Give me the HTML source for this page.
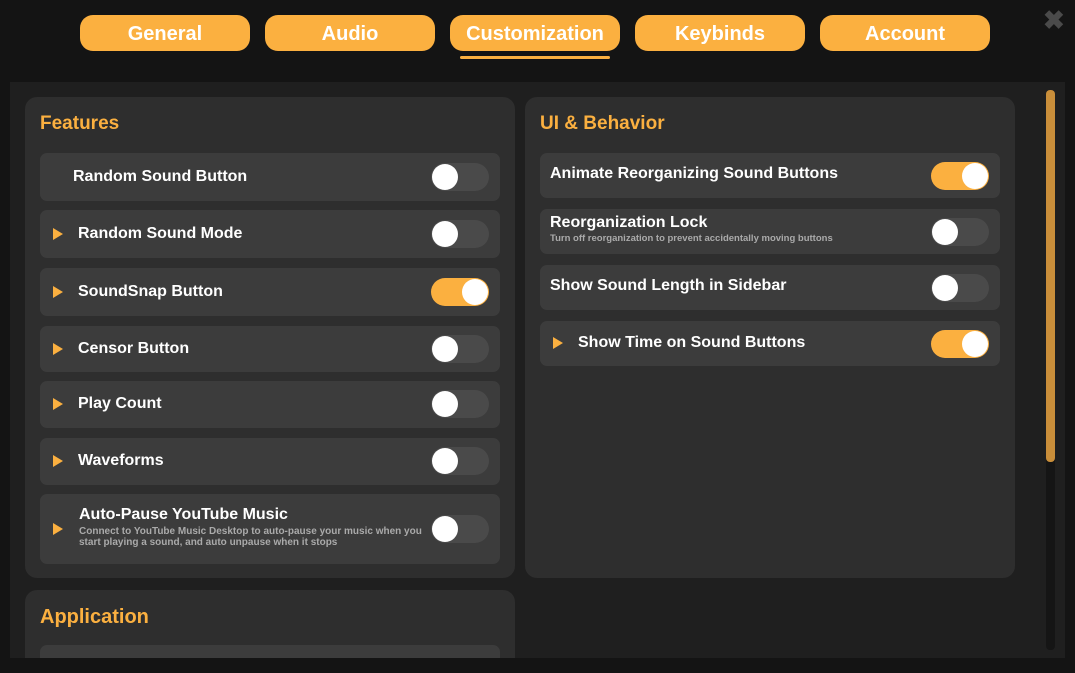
<!DOCTYPE html><html><head><style>
*{box-sizing:border-box;margin:0;padding:0}
html,body{width:1075px;height:673px;overflow:hidden}
body{background:#141414;font-family:"Liberation Sans",sans-serif;position:relative;color:#fff}
.tab{position:absolute;top:15px;width:170px;height:36px;border-radius:13px;background:#fbb040;color:#fff;font-weight:bold;font-size:20px;text-align:center;line-height:38px}
.content{position:absolute;left:10px;top:82px;width:1055px;height:576px;background:#1f1f1f;overflow:hidden}
.panel{position:absolute;background:#2e2e2e;border-radius:12px}
.title{position:absolute;left:15px;top:16px;color:#fbb040;font-weight:bold;font-size:19px}
.row{position:absolute;background:#3c3c3c;border-radius:7px;left:15px;width:460px}
.lab{position:absolute;font-weight:bold;font-size:16px;color:#fff}
.sub{position:absolute;font-size:9.5px;font-weight:bold;color:#aaa;line-height:11px}
.arr{position:absolute;left:13px;width:0;height:0;border-left:10px solid #fbb040;border-top:6px solid transparent;border-bottom:6px solid transparent}
.tg{position:absolute;right:11px;width:58px;height:28px;border-radius:14px;background:#4a4a4a}
.tg::after{content:"";position:absolute;left:1px;top:1px;width:26px;height:26px;border-radius:50%;background:#fff}
.tg.on{background:#fbb040}.tg.on::after{left:31px}
</style></head><body>
<div class="tab" style="left:80px">General</div>
<div class="tab" style="left:265px">Audio</div>
<div class="tab" style="left:450px">Customization</div>
<div class="tab" style="left:635px">Keybinds</div>
<div class="tab" style="left:820px">Account</div>
<div style="position:absolute;left:460px;top:56px;width:150px;height:3px;background:#fbb040;border-radius:2px"></div>
<div style="position:absolute;left:1043px;top:5px;font-size:26px;font-weight:bold;color:#4a4a4a">✖</div>
<div class="content">
<div class="panel" style="left:15px;top:15px;width:490px;height:481px">
<div class="title">Features</div>
<div class="row" style="top:56px;height:48px"><div class="lab" style="left:33px;top:15px">Random Sound Button</div><div class="tg" style="top:10px"></div></div>
<div class="row" style="top:113px;height:48px"><div class="arr" style="top:18px"></div><div class="lab" style="left:38px;top:15px">Random Sound Mode</div><div class="tg" style="top:10px"></div></div>
<div class="row" style="top:171px;height:48px"><div class="arr" style="top:18px"></div><div class="lab" style="left:38px;top:15px">SoundSnap Button</div><div class="tg on" style="top:10px"></div></div>
<div class="row" style="top:229px;height:46px"><div class="arr" style="top:17px"></div><div class="lab" style="left:38px;top:14px">Censor Button</div><div class="tg" style="top:9px"></div></div>
<div class="row" style="top:284px;height:47px"><div class="arr" style="top:17px"></div><div class="lab" style="left:38px;top:14px">Play Count</div><div class="tg" style="top:9px"></div></div>
<div class="row" style="top:341px;height:47px"><div class="arr" style="top:17px"></div><div class="lab" style="left:38px;top:14px">Waveforms</div><div class="tg" style="top:9px"></div></div>
<div class="row" style="top:397px;height:70px"><div class="arr" style="top:29px"></div><div class="lab" style="left:39px;top:12px">Auto-Pause YouTube Music</div><div class="sub" style="left:39px;top:32px;width:352px;font-size:10px">Connect to YouTube Music Desktop to auto-pause your music when you start playing a sound, and auto unpause when it stops</div><div class="tg" style="top:21px"></div></div>
</div>
<div class="panel" style="left:515px;top:15px;width:490px;height:481px">
<div class="title">UI &amp; Behavior</div>
<div class="row" style="top:56px;height:45px"><div class="lab" style="left:10px;top:12px">Animate Reorganizing Sound Buttons</div><div class="tg on" style="top:9px"></div></div>
<div class="row" style="top:112px;height:45px"><div class="lab" style="left:10px;top:5px">Reorganization Lock</div><div class="sub" style="left:10px;top:24px">Turn off reorganization to prevent accidentally moving buttons</div><div class="tg" style="top:9px"></div></div>
<div class="row" style="top:168px;height:45px"><div class="lab" style="left:10px;top:12px">Show Sound Length in Sidebar</div><div class="tg" style="top:9px"></div></div>
<div class="row" style="top:224px;height:45px"><div class="arr" style="top:16px"></div><div class="lab" style="left:38px;top:13px">Show Time on Sound Buttons</div><div class="tg on" style="top:9px"></div></div>
</div>
<div class="panel" style="left:15px;top:508px;width:490px;height:120px">
<div class="title" style="font-size:20px">Application</div>
<div class="row" style="top:55px;height:48px"></div>
</div>
<div style="position:absolute;left:1036px;top:8px;width:9px;height:560px;background:#151515;border-radius:4px"></div>
<div style="position:absolute;left:1036px;top:8px;width:9px;height:372px;background:#c98e3a;border-radius:4px"></div>
</div>
</body></html>
